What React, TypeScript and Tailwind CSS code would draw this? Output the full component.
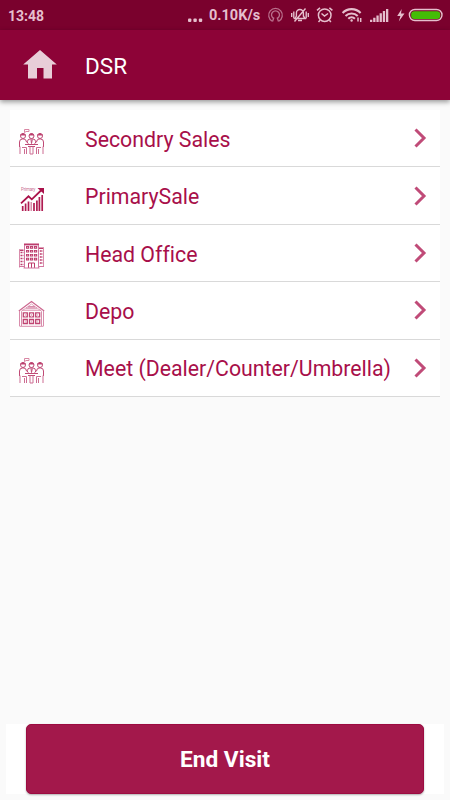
import React from "react";

const pink = "#e5bfcd";

function StatusBar() {
  return (
    <div className="flex h-[30px] w-full items-center bg-[#7a012d] text-[14px] font-bold text-[#e5bfcd]">
      <span className="ml-[8px] w-[179px] pt-[2px] leading-[30px]">13:48</span>
      <svg className="h-[30px] w-[22px]" viewBox="187 0 22 30" fill={pink}>
        <rect x="188" y="18.500" width="3.400" height="3.400" rx="1" />
        <rect x="193.400" y="18.500" width="3.400" height="3.400" rx="1" />
        <rect x="198.800" y="18.500" width="3.400" height="3.400" rx="1" />
      </svg>
      <span className="w-[58px] whitespace-nowrap pt-[2px] text-[14.500px] leading-[30px]">0.10K/s</span>
      <svg className="h-[30px] w-[22px]" viewBox="267 0 22 30" fill="none" stroke="#b9708c" strokeWidth="1.300">
        <path d="M272.300 21.200a6.800 6.800 0 1 1 6.400 0M273.300 18.200a4 4 0 1 1 4.400 0" />
        <path d="M272.500 21.500l1.400-4M278.500 21.500l-1.400-4" />
      </svg>
      <svg className="h-[30px] w-[25px]" viewBox="289 0 25 30" fill="none" stroke={pink} strokeWidth="1.400">
        <path d="M295 18.500h10l-1.600-2.500v-3a3.500 3.500 0 0 0-7 0v3zM298 20.500h4M293.800 11.500v7M291.700 13v4M306.200 11.500v7M308.300 13v4M294.500 21.500L305.500 8.500" />
      </svg>
      <svg className="h-[30px] w-[26px]" viewBox="314 0 26 30" fill="none" stroke={pink} strokeWidth="1.500">
        <circle cx="324.700" cy="15.200" r="6.300" />
        <path d="M321.500 13.500l3 2.500 3.500-2.500M317 10.300l3-2.500M332.400 10.300l-3-2.500M320 20.300l-1.500 1.700M329.400 20.300l1.500 1.700" />
      </svg>
      <svg className="h-[30px] w-[28px]" viewBox="340 0 28 30" fill="none" stroke={pink} strokeWidth="2.100">
        <path d="M342.600 13a12.500 12.500 0 0 1 18 0M345.500 16a8.600 8.600 0 0 1 12.200 0M348.300 18.700a4.700 4.700 0 0 1 6.600 0" />
        <circle cx="351.600" cy="20.500" r="1.200" fill={pink} stroke="none" />
        <path d="M358 17.500v4M360.700 18v4" strokeWidth="1.500" />
      </svg>
      <svg className="h-[30px] w-[26px]" viewBox="368 0 26 30" fill={pink}>
        <path d="M370 19.800h2.300v2.200h-2.300zM373.200 17.800h2.300v4.200h-2.300zM376.400 15.500h2.300v6.500h-2.300zM379.600 13.200h2.300v8.800h-2.300zM382.800 11h2.300v11h-2.300zM386 9h2.300v13h-2.300z" />
      </svg>
      <svg className="h-[30px] w-[56px]" viewBox="394 0 56 30">
        <path d="M401.700 9l-4.500 7h3.200l-1.600 5.500 5.700-8h-3.500z" fill={pink} />
        <rect x="409.400" y="9.500" width="32.600" height="11" rx="5.500" fill="none" stroke={pink} strokeWidth="1.400" />
        <rect x="411.200" y="11.200" width="29" height="7.700" rx="3.200" fill="#44bd06" />
      </svg>
    </div>
  );
}

function PeopleIcon() {
  return (
    <svg className="h-[28px] w-[28px]" viewBox="0 0 28 28" fill="none" stroke="#c04a76" strokeWidth="1">
      <path d="M6.500 1.500h4.500v2H8l-1.500 1.200z" stroke="#d987a4" />
      <circle cx="5" cy="8" r="2.500" />
      <circle cx="13.500" cy="8" r="2.500" />
      <circle cx="22" cy="8" r="2.500" />
      <path d="M2.500 7q2.500-3 5 0zM11 7q2.500-3 5 0zM19.500 7q2.500-3 5 0z" fill="#b52c5e" />
      <path d="M1.500 19v-5q0-3 3-3h1.500q2 0 2.500 3l2 1.500M9.500 15v-1.500q0-2.500 2.500-2.500h3q2.500 0 2.500 2.500v1.500M25.500 19v-5q0-3-3-3h-1.500q-2 0-2.500 3l-2 1.500M13 11.500l.5 4 .8-4" />
      <path d="M7 16.500h13M10 18.500h7" />
      <path d="M2 18.500v7.500M4 19.500h4.500v6.500M6.500 21v5M25 18.500v7.500M23 19.500h-4.500v6.500M20.500 21v5M12 18.500v7.500h3v-7.500" stroke="#cd6d92" />
    </svg>
  );
}

function ChartIcon() {
  return (
    <svg className="h-[28px] w-[28px]" viewBox="0 0 28 28" fill="none">
      <text x="3" y="5.500" fontSize="4.500" textLength="14.500" fill="#c8708f" className="font-['Roboto',sans-serif]">Primary</text>
      <path d="M4.700 26v-5M7.600 26v-7.500M10.500 26v-9.500M16 26v-8M18.900 26V15.500M21.400 26V12M24.200 26V10" stroke="#b01c52" strokeWidth="1.700" />
      <path d="M13.200 26v-9" stroke="#d27c9c" strokeWidth="1.300" />
      <path d="M3 18.300l7.500-7 3.300 3L23.500 5" stroke="#aa124b" strokeWidth="1.800" />
      <path d="M19.500 3h6.500v6z" fill="#aa124b" />
    </svg>
  );
}

function OfficeIcon() {
  return (
    <svg className="h-[28px] w-[28px]" viewBox="0 0 28 28" fill="none" stroke="#bd3d6d">
      <path d="M6.500 26V3h14v23" stroke="#d277a0" />
      <path d="M6 2.300h15M1 8.200h4.500M21 6.200h5" strokeWidth="1.500" />
      <path d="M1.500 25.500V8M25.500 25V6" stroke="#d98dac" />
      <path d="M8 5.400h11.500M8 9.300h11.500M8 13.200h11.500M8 17.100h11.500" strokeWidth="2.600" strokeDasharray="3.200 .8" />
      <path d="M9.100 5.400h11M9.100 9.300h11M9.100 13.200h11M9.100 17.100h11" stroke="#f3d9e3" strokeWidth=".8" strokeDasharray="1 3" />
      <path d="M2.500 10.500h3M2.500 13.500h3M2.500 16.500h3M2.500 19.500h3M2.500 22.500h3M21.800 9h3M21.800 12h3M21.800 15h3M21.800 18h3M21.800 21h3" strokeWidth="1.500" strokeDasharray="2 .6" />
      <path d="M10.500 26v-5h6v5M13.500 21v5" />
      <path d="M5.500 26h16M1 24.500h5M21 24.500h5" stroke="#d277a0" />
    </svg>
  );
}

function DepoIcon() {
  return (
    <svg className="h-[28px] w-[28px]" viewBox="0 0 28 28" fill="none" stroke="#d98dac">
      <path d="M.8 11L13.500 1.500 26.200 11" stroke="#cc6890" strokeWidth="1.200" />
      <path d="M3 11.500L13.500 4 24 11.500" stroke="#e3abc0" />
      <path d="M1.500 11v15M3.500 11.500v14.500M25.500 11v15M23.500 11.500v14.500M1.500 26.300h24M4 10.200h19" />
      <path d="M10 6.700h7M8 8.200h11" stroke="#d98dac" strokeWidth="1.300" />
      <path d="M5.300 12.800h4v4h-4zM11.500 12.800h4v4h-4zM17.700 12.800h4v4h-4zM5.300 19.500h4v4h-4zM11.500 19.500h4v4h-4zM17.700 19.500h4v4h-4z" stroke="#c04472" strokeWidth="1.300" />
      <path d="M7.300 13v4M13.500 13v4M19.700 13v4M7.300 20v3M13.500 20v3M19.700 20v3" stroke="#e6b4c7" />
    </svg>
  );
}

const rows = [
  { label: "Secondry Sales", Icon: PeopleIcon },
  { label: "PrimarySale", Icon: ChartIcon },
  { label: "Head Office", Icon: OfficeIcon },
  { label: "Depo", Icon: DepoIcon },
  { label: "Meet (Dealer/Counter/Umbrella)", Icon: PeopleIcon },
];

export default function App() {
  return (
    <div className="flex h-[800px] w-[450px] flex-col bg-[#fafafa] font-['Roboto',sans-serif]">
      <StatusBar />
      <header className="flex h-[70px] shrink-0 items-center bg-[#8d0337] shadow-[0_2px_5px_rgba(0,0,0,0.4)]">
        <svg className="ml-[23px] h-[30px] w-[34px]" viewBox="0 0 34 30" fill="#e8cdd8">
          <path d="M17 0L33.800 14.500H29V28.500H20.500V18H14V28.500H5V14.500H.2z" />
        </svg>
        <h1 className="ml-[28px] pt-[1px] text-[22.500px] leading-[30px] text-white">DSR</h1>
      </header>
      <main className="mx-[10px] mt-[10px] flex flex-col">
        {rows.map(({ label, Icon }) => (
          <div key={label} className="flex h-[57.400px] items-center border-b border-[#d9d9d9] bg-white">
            <div className="ml-[8px] mt-[7px] flex h-[28px] w-[67px]">
              <Icon />
            </div>
            <span className="w-[328px] whitespace-nowrap pt-[3px] text-[21.300px] text-[#a80f4a] [font-variant-ligatures:none]">{label}</span>
            <svg className="h-[20px] w-[14px]" viewBox="0 0 14 20" fill="none" stroke="#c04b78" strokeWidth="3">
              <path d="M2.500 1.500L11 10l-8.500 8.500" />
            </svg>
          </div>
        ))}
      </main>
      <footer className="mx-[6px] mb-[6px] mt-auto flex h-[70px] bg-white px-[20px]">
        <button className="flex-1 rounded-[5px] border border-[#9c0b41] bg-[#a3184b] pt-[3px] text-[22.700px] font-bold text-white shadow-[0_1px_2px_rgba(0,0,0,0.3)]">
          End Visit
        </button>
      </footer>
    </div>
  );
}
